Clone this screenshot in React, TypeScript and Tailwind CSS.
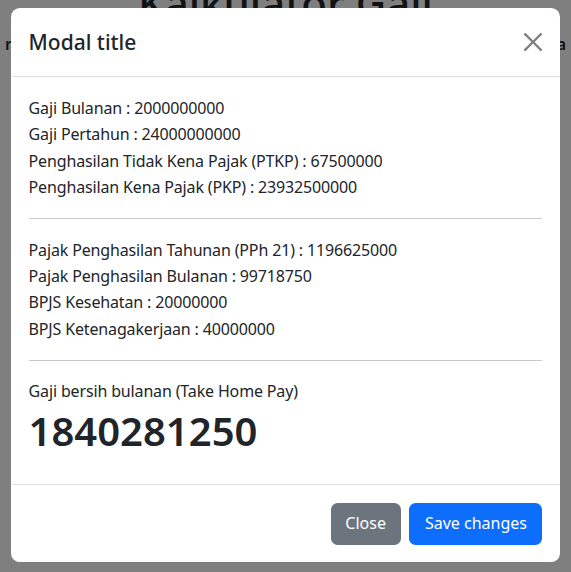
const rincian = [
  'Gaji Bulanan : 2000000000',
  'Gaji Pertahun : 24000000000',
  'Penghasilan Tidak Kena Pajak (PTKP) : 67500000',
  'Penghasilan Kena Pajak (PKP) : 23932500000',
];

const potongan = [
  'Pajak Penghasilan Tahunan (PPh 21) : 1196625000',
  'Pajak Penghasilan Bulanan : 99718750',
  'BPJS Kesehatan : 20000000',
  'BPJS Ketenagakerjaan : 40000000',
];

function CloseIcon() {
  return (
    <svg viewBox="0 0 16 16" className="h-[18px] w-[18px] opacity-50" fill="#000">
      <path d="M.293.293a1 1 0 0 1 1.414 0L8 6.586 14.293.293a1 1 0 1 1 1.414 1.414L9.414 8l6.293 6.293a1 1 0 0 1-1.414 1.414L8 9.414l-6.293 6.293a1 1 0 0 1-1.414-1.414L6.586 8 .293 1.707a1 1 0 0 1 0-1.414z" />
    </svg>
  );
}

export default function App() {
  return (
    <div
      className="relative h-[572px] w-full overflow-hidden bg-white text-[#212529]"
      style={{ fontFamily: '"Noto Sans", "Open Sans", sans-serif' }}
    >
      {/* Page behind the modal */}
      <div className="flex flex-col">
        <h1 className="-mt-[23px] text-center text-[42px] font-medium leading-[52px]">Kalkulator Gaji</h1>
        <div className="mt-[2px] flex justify-between px-[5px] text-[16px] font-semibold leading-[26px]">
          <span>r</span>
          <span>a</span>
        </div>
      </div>

      {/* Backdrop */}
      <div className="absolute inset-0 bg-black/50" />

      {/* Modal */}
      <div className="absolute inset-0 flex justify-center pt-[8px]">
        <div className="flex h-fit w-[549px] flex-col rounded-[8.8px] bg-white">
          <div className="flex items-center justify-between border-b border-[#dee2e6] px-[17.6px] py-[17.6px]">
            <h5 className="text-[21px] font-medium leading-[33px]">Modal title</h5>
            <button type="button" className="flex items-center justify-center">
              <CloseIcon />
            </button>
          </div>

          <div className="p-[17.6px] text-[16px] leading-[26.4px] tracking-[-0.15px]">
            <div>
              {rincian.map((line) => (
                <div key={line}>{line}</div>
              ))}
            </div>
            <hr className="my-[17.6px] border-t border-[#c8c9ca]" />
            <div>
              {potongan.map((line) => (
                <div key={line}>{line}</div>
              ))}
            </div>
            <hr className="my-[17.6px] border-t border-[#c8c9ca]" />
            <div>Gaji bersih bulanan (Take Home Pay)</div>
            <h1 className="mb-[8.8px] text-[40px] font-semibold leading-[52.8px] tracking-normal">1840281250</h1>
          </div>

          <div className="flex items-center justify-end gap-[8.8px] border-t border-[#dee2e6] px-[17.6px] py-[17.6px] text-[16px]">
            <button
              type="button"
              className="h-[42px] w-[70px] rounded-[6.6px] bg-[#6c757d] leading-[26.4px] text-white"
            >
              Close
            </button>
            <button
              type="button"
              className="h-[42px] w-[133px] rounded-[6.6px] bg-[#0d6efd] leading-[26.4px] text-white"
            >
              Save changes
            </button>
          </div>
        </div>
      </div>
    </div>
  );
}
